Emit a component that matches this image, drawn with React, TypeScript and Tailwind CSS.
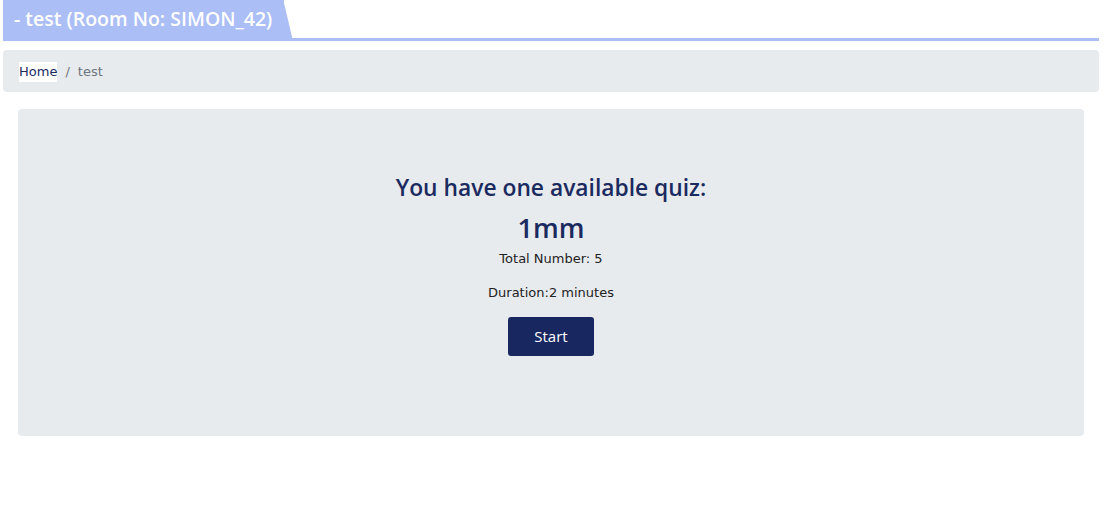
export default function App() {
  return (
    <div className="min-h-[521px] bg-white px-[3px] pr-[9px]" style={{ fontFamily: "'Open Sans', 'Noto Sans', sans-serif" }}>
      {/* Title tab */}
      <div className="flex h-[41px] border-b-[3px] border-[#abbef5]">
        <div className="relative flex h-[38px] items-center bg-[#abbef5] pl-[11px] pr-[12px]">
          <span className="text-[19.5px] font-semibold leading-none text-white">- test (Room No: SIMON_42)</span>
          <div
            className="absolute right-[-8px] top-0 h-[38px] w-[9px] bg-[#abbef5]"
            style={{ clipPath: "polygon(0 0, 0 100%, 100% 100%, 0 0)" }}
          />
        </div>
      </div>

      {/* Breadcrumb */}
      <div className="mt-[9px] flex h-[42px] items-center rounded-[4px] bg-[#e8ebee] px-[16px] pt-[2px] text-[13px]" style={{ fontFamily: "'DejaVu Sans', Verdana, sans-serif" }}>
        <span className="bg-white text-[#1b2a5f]">Home</span>
        <span className="px-[8px] text-[#6c757d]">/</span>
        <span className="text-[#6c757d]">test</span>
      </div>

      {/* Quiz card */}
      <div className="mx-[15px] mt-[17px] flex h-[327px] flex-col items-center rounded-[4px] bg-[#e8ebee] pt-[62px] text-[#1b2a5f]">
        <h2 className="text-[22.8px] font-semibold leading-[34px]">You have one available quiz:</h2>
        <h3 className="mt-[4px] text-[27px] font-semibold leading-[38px]">1mm</h3>
        <p className="mt-[2px] text-[13px] text-[#222]" style={{ fontFamily: "'DejaVu Sans', Verdana, sans-serif" }}>Total Number: 5</p>
        <p className="mt-[14px] text-[13px] text-[#222]" style={{ fontFamily: "'DejaVu Sans', Verdana, sans-serif" }}>Duration:2 minutes</p>
        <button className="mt-[15px] h-[39px] w-[86px] rounded-[3px] bg-[#18275f] text-[15px] text-white">Start</button>
      </div>
    </div>
  )
}
